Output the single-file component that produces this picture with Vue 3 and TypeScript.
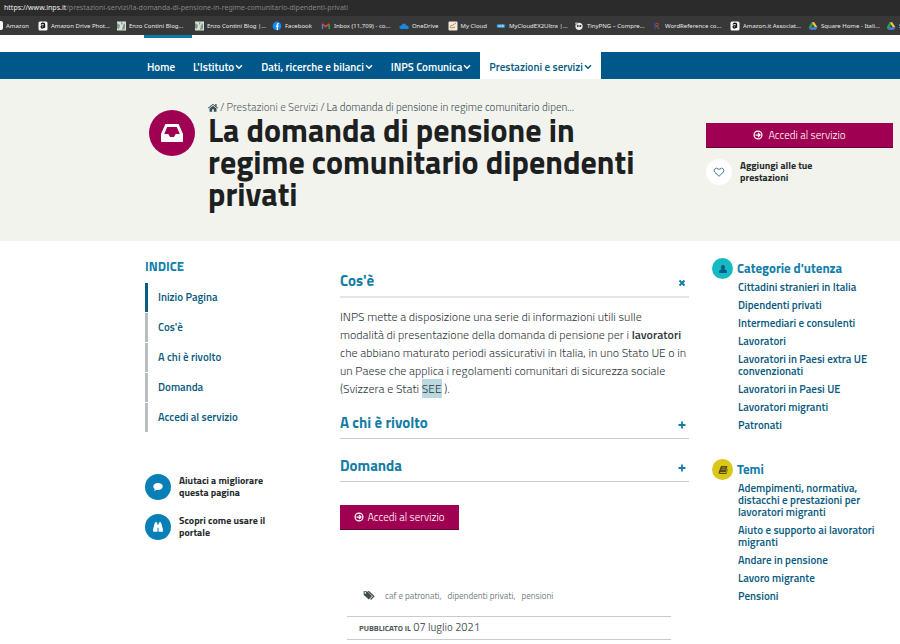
<script setup lang="ts">
import { ref } from 'vue'

interface Bookmark { label: string; icon: string; long?: boolean }

const bookmarks: Bookmark[] = [
  { label: 'Amazon Drive Phot...', icon: 'amazon', long: true },
  { label: 'Enzo Contini Blog...', icon: 'blog', long: true },
  { label: 'Enzo Contini Blog |...', icon: 'blog', long: true },
  { label: 'Facebook', icon: 'facebook' },
  { label: 'Inbox (11,709) - co...', icon: 'gmail', long: true },
  { label: 'OneDrive', icon: 'cloud' },
  { label: 'My Cloud', icon: 'mycloud' },
  { label: 'MyCloudEX2Ultra |...', icon: 'wd', long: true },
  { label: 'TinyPNG – Compre...', icon: 'panda', long: true },
  { label: 'WordReference co...', icon: 'word', long: true },
  { label: 'Amazon.it Associat...', icon: 'amazon', long: true },
  { label: 'Square Home - Itali...', icon: 'drive', long: true },
  { label: 'S', icon: 'drive' },
]

const menu = [
  { label: 'Home', sub: false },
  { label: "L'Istituto", sub: true },
  { label: 'Dati, ricerche e bilanci', sub: true },
  { label: 'INPS Comunica', sub: true },
  { label: 'Prestazioni e servizi', sub: true },
]

const index = ['Inizio Pagina', "Cos'è", 'A chi è rivolto', 'Domanda', 'Accedi al servizio']

const categories = [
  'Cittadini stranieri in Italia', 'Dipendenti privati', 'Intermediari e consulenti', 'Lavoratori',
  'Lavoratori in Paesi extra UE convenzionati', 'Lavoratori in Paesi UE', 'Lavoratori migranti', 'Patronati',
]
const topics = [
  'Adempimenti, normativa, distacchi e prestazioni per lavoratori migranti',
  'Aiuto e supporto ai lavoratori migranti', 'Andare in pensione', 'Lavoro migrante', 'Pensioni',
]
const open = ref(true)
</script>

<template>
  <div class="page">
    <div class="browser">
      <div class="address"><b>https://www.inps.it</b>/prestazioni-servizi/la-domanda-di-pensione-in-regime-comunitario-dipendenti-privati</div>
      <div class="bookmarks">
        <a href="#" class="bm first"><i class="stub"></i><span>Amazon</span></a>
        <a v-for="(b, i) in bookmarks" :key="i" href="#" class="bm">
          <svg viewBox="0 0 10 10" aria-hidden="true">
            <template v-if="b.icon === 'amazon'">
              <rect x=".5" y=".5" width="9" height="9" rx="1.5" fill="#fafaf5" />
              <path d="M3.2 3.5C3.5 1.8 6.5 1.8 6.5 3.5V6.8M6.4 4.6C4 4.5 3 5 3.2 6.2C3.5 7.4 5.8 7 6.4 5.6" fill="none" stroke="#111" stroke-width="1.4" />
            </template>
            <template v-else-if="b.icon === 'blog'">
              <rect x="1" y=".5" width="9" height="9" fill="#d8e0d6" />
              <path d="M1 2L4 4L3 8L1 7M5 1L7 2L5 4M7 4L9 2V8L6 9" fill="#7b9b8c" />
            </template>
            <template v-else-if="b.icon === 'facebook'">
              <circle cx="5" cy="5" r="4.4" fill="#1688f0" />
              <path d="M6.8 2.7H6.3Q5.3 2.7 5.3 3.8V9M3.9 5.2H6.7" fill="none" stroke="#fff" stroke-width="1.2" />
            </template>
            <template v-else-if="b.icon === 'gmail'">
              <path d="M1.5 8V3.5" stroke="#4285f4" stroke-width="1.4" />
              <path d="M1.2 2.8L4.8 5.6L8.2 2.8" fill="none" stroke="#e94335" stroke-width="1.5" />
              <path d="M8.2 8V3.5" stroke="#34a853" stroke-width="1.4" />
            </template>
            <path v-else-if="b.icon === 'cloud'" d="M2.5 8Q0 7.8.3 6Q.7 4.6 2.2 4.7Q3.3 2 5.8 2.8Q7.1 3.2 7.5 4.6Q9.8 4.7 9.8 6.4Q9.7 8 8 8Z" fill="#1689dc" />
            <template v-else-if="b.icon === 'mycloud'">
              <rect x=".5" y=".5" width="9" height="9" rx="1" fill="#f3eadf" />
              <path d="M2 7Q2 4 5 4L8 2M3 7L7 6" fill="none" stroke="#d58c4f" />
            </template>
            <template v-else-if="b.icon === 'wd'">
              <rect x=".5" y="3" width="9" height="4" rx="2" fill="#2e86bd" />
              <path d="M2 4L3 6L4 4L5 6M6 4V6L8 5Z" fill="none" stroke="#d9edf7" stroke-width=".7" />
            </template>
            <template v-else-if="b.icon === 'panda'">
              <circle cx="5" cy="5.3" r="3.6" fill="#e9e9e5" />
              <circle cx="2.4" cy="2.5" r="1.3" fill="#aaa" /><circle cx="3.8" cy="5" r="1" fill="#333" /><circle cx="6.3" cy="5" r="1" fill="#333" />
            </template>
            <template v-else-if="b.icon === 'word'">
              <path d="M3 2V8M3 3L6 7" stroke="#4f4aa0" stroke-width="1.2" />
              <path d="M4 2.4H6Q7 3.4 6 4.7H4M5 5L7 8" fill="none" stroke="#a54c35" />
            </template>
            <template v-else>
              <path d="M3.6 1.2H6.3L9.4 6.2H6.8Z" fill="#fbc92d" />
              <path d="M3.6 1.2L5 3.7L2 8.7L.7 6.4Z" fill="#22a565" />
              <path d="M3.4 6.2H9.4L8 8.7H2Z" fill="#3f82ee" />
            </template>
          </svg>
          <span :class="{ long: b.long }">{{ b.label }}</span>
        </a>
      </div>
    </div>

    <div class="strip"><span class="accent"></span></div>
    <nav class="menu">
      <a v-for="(m, i) in menu" :key="m.label" href="#" :class="{ active: i === 4 }">
        {{ m.label }}
        <svg v-if="m.sub" viewBox="0 0 8 6" aria-hidden="true"><path d="M1 1.3L4 4.3L7 1.3" fill="none" stroke="currentColor" stroke-width="1.5" /></svg>
      </a>
    </nav>

    <header class="hero">
      <div class="intro">
        <div class="badge">
          <svg viewBox="0 0 24 20" aria-hidden="true">
            <path fill="#fff" fill-rule="evenodd" d="M5.4 1H18.6L23 11V18Q23 19 22 19H2Q1 19 1 18V11ZM7.2 4L4.2 11H8.3L10 14H14L15.7 11H19.8L16.8 4Z" />
          </svg>
        </div>
        <div class="headline">
          <div class="crumbs">
            <svg viewBox="0 0 12 10" aria-label="Home"><path d="M6 .4L12 5.4L11.3 6.2L6 1.8L.7 6.2L0 5.4ZM8.7.8H10.3V4L8.7 2.6ZM6 2.8L10.2 6.3V10H7V7H5V10H1.8V6.3Z" fill="currentColor" /></svg>
            <span>/</span><a href="#">Prestazioni e Servizi</a><span>/</span><span>La domanda di pensione in regime comunitario dipen...</span>
          </div>
          <h1>La domanda di pensione in regime comunitario dipendenti privati</h1>
        </div>
      </div>
      <div class="actions">
        <button class="access" type="button">
          <svg viewBox="0 0 12 12" aria-hidden="true"><circle cx="6" cy="6" r="4.7" fill="none" stroke="#fff" stroke-width="1.5" /><path d="M3 6H8.4M6 3.5L8.5 6L6 8.5" fill="none" stroke="#fff" stroke-width="1.5" /></svg>
          Accedi al servizio
        </button>
        <a href="#" class="round-link">
          <i class="circle white"><svg viewBox="0 0 14 14" aria-hidden="true"><path d="M7 12L2.3 7.5Q.6 5.7 1.6 3.9Q3.8.9 7 4Q10.2.9 12.4 3.9Q13.4 5.7 11.7 7.5Z" fill="none" stroke="#31729a" stroke-width="1.1" /></svg></i>
          <span>Aggiungi alle tue prestazioni</span>
        </a>
      </div>
    </header>

    <div class="body">
      <aside class="index">
        <h2>INDICE</h2>
        <ul>
          <li v-for="(t, i) in index" :key="t" :class="{ current: i === 0 }"><a href="#">{{ t }}</a></li>
        </ul>
        <div class="help">
          <a href="#" class="round-link">
            <i class="circle blue"><svg viewBox="0 0 14 14" aria-hidden="true"><path d="M7 2.4C10.3 2.4 12.5 4.2 12.5 6.4S10.2 10.4 7.2 10.4Q6.2 10.4 5.4 10.2Q3.8 11.6 2.1 11.5Q3.3 10.5 3.2 9.3Q1.5 8.2 1.5 6.4C1.5 4.2 3.7 2.4 7 2.4Z" fill="#fff" /></svg></i>
            <span>Aiutaci a migliorare questa pagina</span>
          </a>
          <a href="#" class="round-link">
            <i class="circle blue"><svg viewBox="0 0 14 14" aria-hidden="true"><path d="M3.4 1.5H5.8V3H6.4V12.5H1.3V9.5L3 3H3.4ZM8.2 1.5H10.6V3H11L12.7 9.5V12.5H7.6V3H8.2ZM6.2 4.5H7.8V8H6.2Z" fill="#fff" /></svg></i>
            <span>Scopri come usare il portale</span>
          </a>
        </div>
      </aside>

      <main class="content">
        <h2 class="bar soft"><button type="button" @click="open = !open">Cos'è
          <svg viewBox="0 0 8 8" aria-hidden="true"><path d="M1.5 1.5L6.5 6.5M6.5 1.5L1.5 6.5" stroke="currentColor" stroke-width="2" /></svg></button></h2>
        <p v-if="open">INPS mette a disposizione una serie di informazioni utili sulle<br>modalità di presentazione della domanda di pensione per i <b>lavoratori</b> che abbiano maturato periodi assicurativi in Italia, in uno Stato UE o in un Paese che applica i regolamenti comunitari di sicurezza sociale (Svizzera e Stati <mark>SEE</mark> ).</p>
        <h2 v-for="t in ['A chi è rivolto', 'Domanda']" :key="t" class="bar"><button type="button">{{ t }}
          <svg viewBox="0 0 8 8" aria-hidden="true"><path d="M4 .5V7.5M.5 4H7.5" stroke="currentColor" stroke-width="1.8" /></svg></button></h2>
        <button class="access small" type="button">
          <svg viewBox="0 0 12 12" aria-hidden="true"><circle cx="6" cy="6" r="4.7" fill="none" stroke="#fff" stroke-width="1.5" /><path d="M3 6H8.4M6 3.5L8.5 6L6 8.5" fill="none" stroke="#fff" stroke-width="1.5" /></svg>
          Accedi al servizio
        </button>
        <footer>
          <div class="tags">
            <svg viewBox="0 0 12 10" aria-hidden="true"><path fill-rule="evenodd" d="M.5 1.2H4L9 6L5.8 9.6L.8 5ZM2.3 2A.8.8 0 1 0 2.3 3.7A.8.8 0 1 0 2.3 2Z" fill="#414b4e" /><path d="M5.3 1.2L10.8 6.2L7.6 9.5" fill="none" stroke="#414b4e" stroke-width="1.2" /></svg>
            <a href="#">caf e patronati,</a><a href="#">dipendenti privati,</a><a href="#">pensioni</a>
          </div>
          <div class="published"><b>PUBBLICATO IL</b> 07 luglio 2021</div>
        </footer>
      </main>

      <aside class="related">
        <section>
          <h2><i class="dot teal"><svg viewBox="0 0 10 10" aria-hidden="true"><path d="M5 1Q7 1 7 3.2Q6.9 4.8 6 5.3Q9 5.8 9 8V9H1V8Q1 5.8 4 5.3Q3.1 4.8 3 3.2Q3 1 5 1Z" fill="#075b87" /></svg></i>Categorie d'utenza</h2>
          <ul><li v-for="c in categories" :key="c"><a href="#">{{ c }}</a></li></ul>
        </section>
        <section>
          <h2><i class="dot yellow"><svg viewBox="0 0 10 10" aria-hidden="true"><path d="M3 1H9.5L7.7 7.2H2.2Q1.5 8 2.4 8H8L9.3 4L9.8 4.5L8.4 9H1.8Q.2 8.7.7 7Z" fill="#574c12" /><path d="M4 2.8H7.7M3.5 4.4H7.2" stroke="#cdb916" stroke-width=".6" /></svg></i>Temi</h2>
          <ul><li v-for="t in topics" :key="t"><a href="#">{{ t }}</a></li></ul>
        </section>
      </aside>
    </div>
  </div>
</template>

<style>
body { margin: 0; background: #fff; overflow-x: hidden; }
</style>

<style scoped>
* { box-sizing: border-box; }
.page { font-family: "Titillium Web", Roboto, sans-serif; font-size: 11px; color: #4a5154; overflow: hidden; }
a { color: inherit; text-decoration: none; }
h1, h2, p, ul { margin: 0; padding: 0; }
ul { list-style: none; }
button { font-family: inherit; border: 0; cursor: pointer; }
svg { flex: none; display: block; }

.browser { font-family: "Noto Sans", sans-serif; font-size: 7px; }
.address { height: 16px; padding-left: 4px; line-height: 16px; background: #2b2b2b; color: #858585; white-space: nowrap; }
.address b { color: #f1f1f1; font-weight: 400; }
.bookmarks { display: flex; gap: 9px; height: 19px; align-items: center; background: #383838; color: #e8e8e8; white-space: nowrap; overflow: hidden; font-size: 6px; }
.bm { display: flex; flex: none; align-items: center; gap: 3px; }
.bm svg { width: 10px; height: 10px; }
.stub { width: 3px; height: 9px; border-radius: 0 2px 2px 0; background: #fafaf5; }
.long { width: 56px; }

.strip { height: 17px; padding-left: 144px; }
.accent { display: block; width: 48px; height: 3px; background: #087da8; }
.menu { display: flex; height: 27px; padding-left: 138px; background: #00578a; color: #fff; font-size: 11px; font-weight: 600; }
.menu a { display: flex; align-items: center; gap: 1px; padding: 3px 9px 0; white-space: nowrap; }
.menu svg { width: 8px; height: 6px; }
.menu .active { background: #fff; color: #095c83; }

.hero { display: grid; grid-template-columns: 1fr 187px; gap: 17px; min-height: 162px; padding: 21px 7px 0 149px; background: #f3f3ee; }
.intro { display: flex; gap: 13px; }
.badge { display: grid; place-items: center; flex: none; width: 46px; height: 46px; margin-top: 10px; border-radius: 50%; background: #9f0052; }
.badge svg { width: 24px; height: 20px; }
.headline { flex: 1; }
.crumbs { display: flex; align-items: center; gap: 2px; height: 14px; font-size: 11px; line-height: 14px; font-weight: 300; white-space: nowrap; color: #3d5058; }
.crumbs svg { width: 10px; height: 9px; }
.crumbs a { color: #5a666b; }
h1 { max-width: 430px; font-size: 32px; line-height: 32px; font-weight: 700; color: #1c2021; }
.actions { padding-top: 23px; }
.access { display: flex; align-items: center; justify-content: center; gap: 5px; width: 100%; height: 25px; padding: 0; background: #9f0052; border-bottom: 1px solid #650039; color: #fff; font-size: 11px; font-weight: 300; }
.access svg { width: 10px; height: 10px; }
.round-link { display: flex; align-items: center; gap: 8px; font-size: 10px; line-height: 12px; font-weight: 700; color: #262b2d; }
.round-link span { max-width: 96px; }
.actions .round-link { margin-top: 11px; }
.circle { display: grid; place-items: center; flex: none; width: 26px; height: 26px; border-radius: 50%; }
.circle svg { width: 12px; height: 12px; }
.white { background: #fff; }
.blue { background: #087fb7; }

.body { display: grid; grid-template-columns: 178px 1fr 187px; gap: 17px; padding: 17px 7px 0 145px; }
.index h2 { font-size: 13px; line-height: 16px; font-weight: 700; color: #147fac; }
.index ul { display: grid; gap: 1px; margin-top: 9px; }
.index li { padding-left: 10px; border-left: 3px solid #b9bec0; line-height: 29px; font-weight: 600; color: #0a5b80; }
.index .current { border-color: #0a5b80; }
.help { display: grid; gap: 14px; margin-top: 42px; }

.bar { border-bottom: 1px solid #c9cbcc; }
.bar.soft { border-bottom: 2px solid #e4e6e6; }
.bar button { display: flex; width: 100%; align-items: center; justify-content: space-between; padding: 0 3px 6px 0; background: none; color: #157da5; font-size: 15px; line-height: 18px; font-weight: 700; }
.bar svg { width: 8px; height: 8px; margin-top: 4px; }
.bar.soft button { padding-top: 14px; }
.content p { padding: 10px 0 16px; font-size: 12px; line-height: 18px; font-weight: 300; color: #30383b; }
.content p b { font-weight: 600; }
.content .bar + .bar { margin-top: 18px; }
mark { background: #b9d8e0; color: inherit; }
.small { width: 119px; margin-top: 23px; gap: 3px; }
footer { margin: 56px 18px 0 7px; }
.tags { display: flex; align-items: center; gap: 6px; padding-left: 16px; height: 18px; font-size: 9px; color: #758084; }
.tags svg { width: 12px; height: 10px; margin-right: 4px; }
.published { margin-top: 12px; padding-left: 12px; border: solid #c9cbcc; border-width: 1px 0; line-height: 21px; color: #50585b; }
.published b { font-size: 8px; }

.related { padding-left: 6px; }
.related h2 { display: flex; align-items: center; gap: 4px; font-size: 13px; line-height: 21px; font-weight: 700; color: #137eaa; }
.related ul { display: grid; gap: 6px; margin: 2px 0 0 26px; font-size: 11px; line-height: 12px; font-weight: 600; color: #0a5b80; }
.related li { max-width: 138px; }
.dot { display: grid; place-items: center; flex: none; width: 21px; height: 21px; border-radius: 50%; }
.dot svg { width: 10px; height: 10px; }
.teal { background: #16bac2; }
.yellow { background: #dac719; }
.related section + section { margin-top: 28px; }
</style>
